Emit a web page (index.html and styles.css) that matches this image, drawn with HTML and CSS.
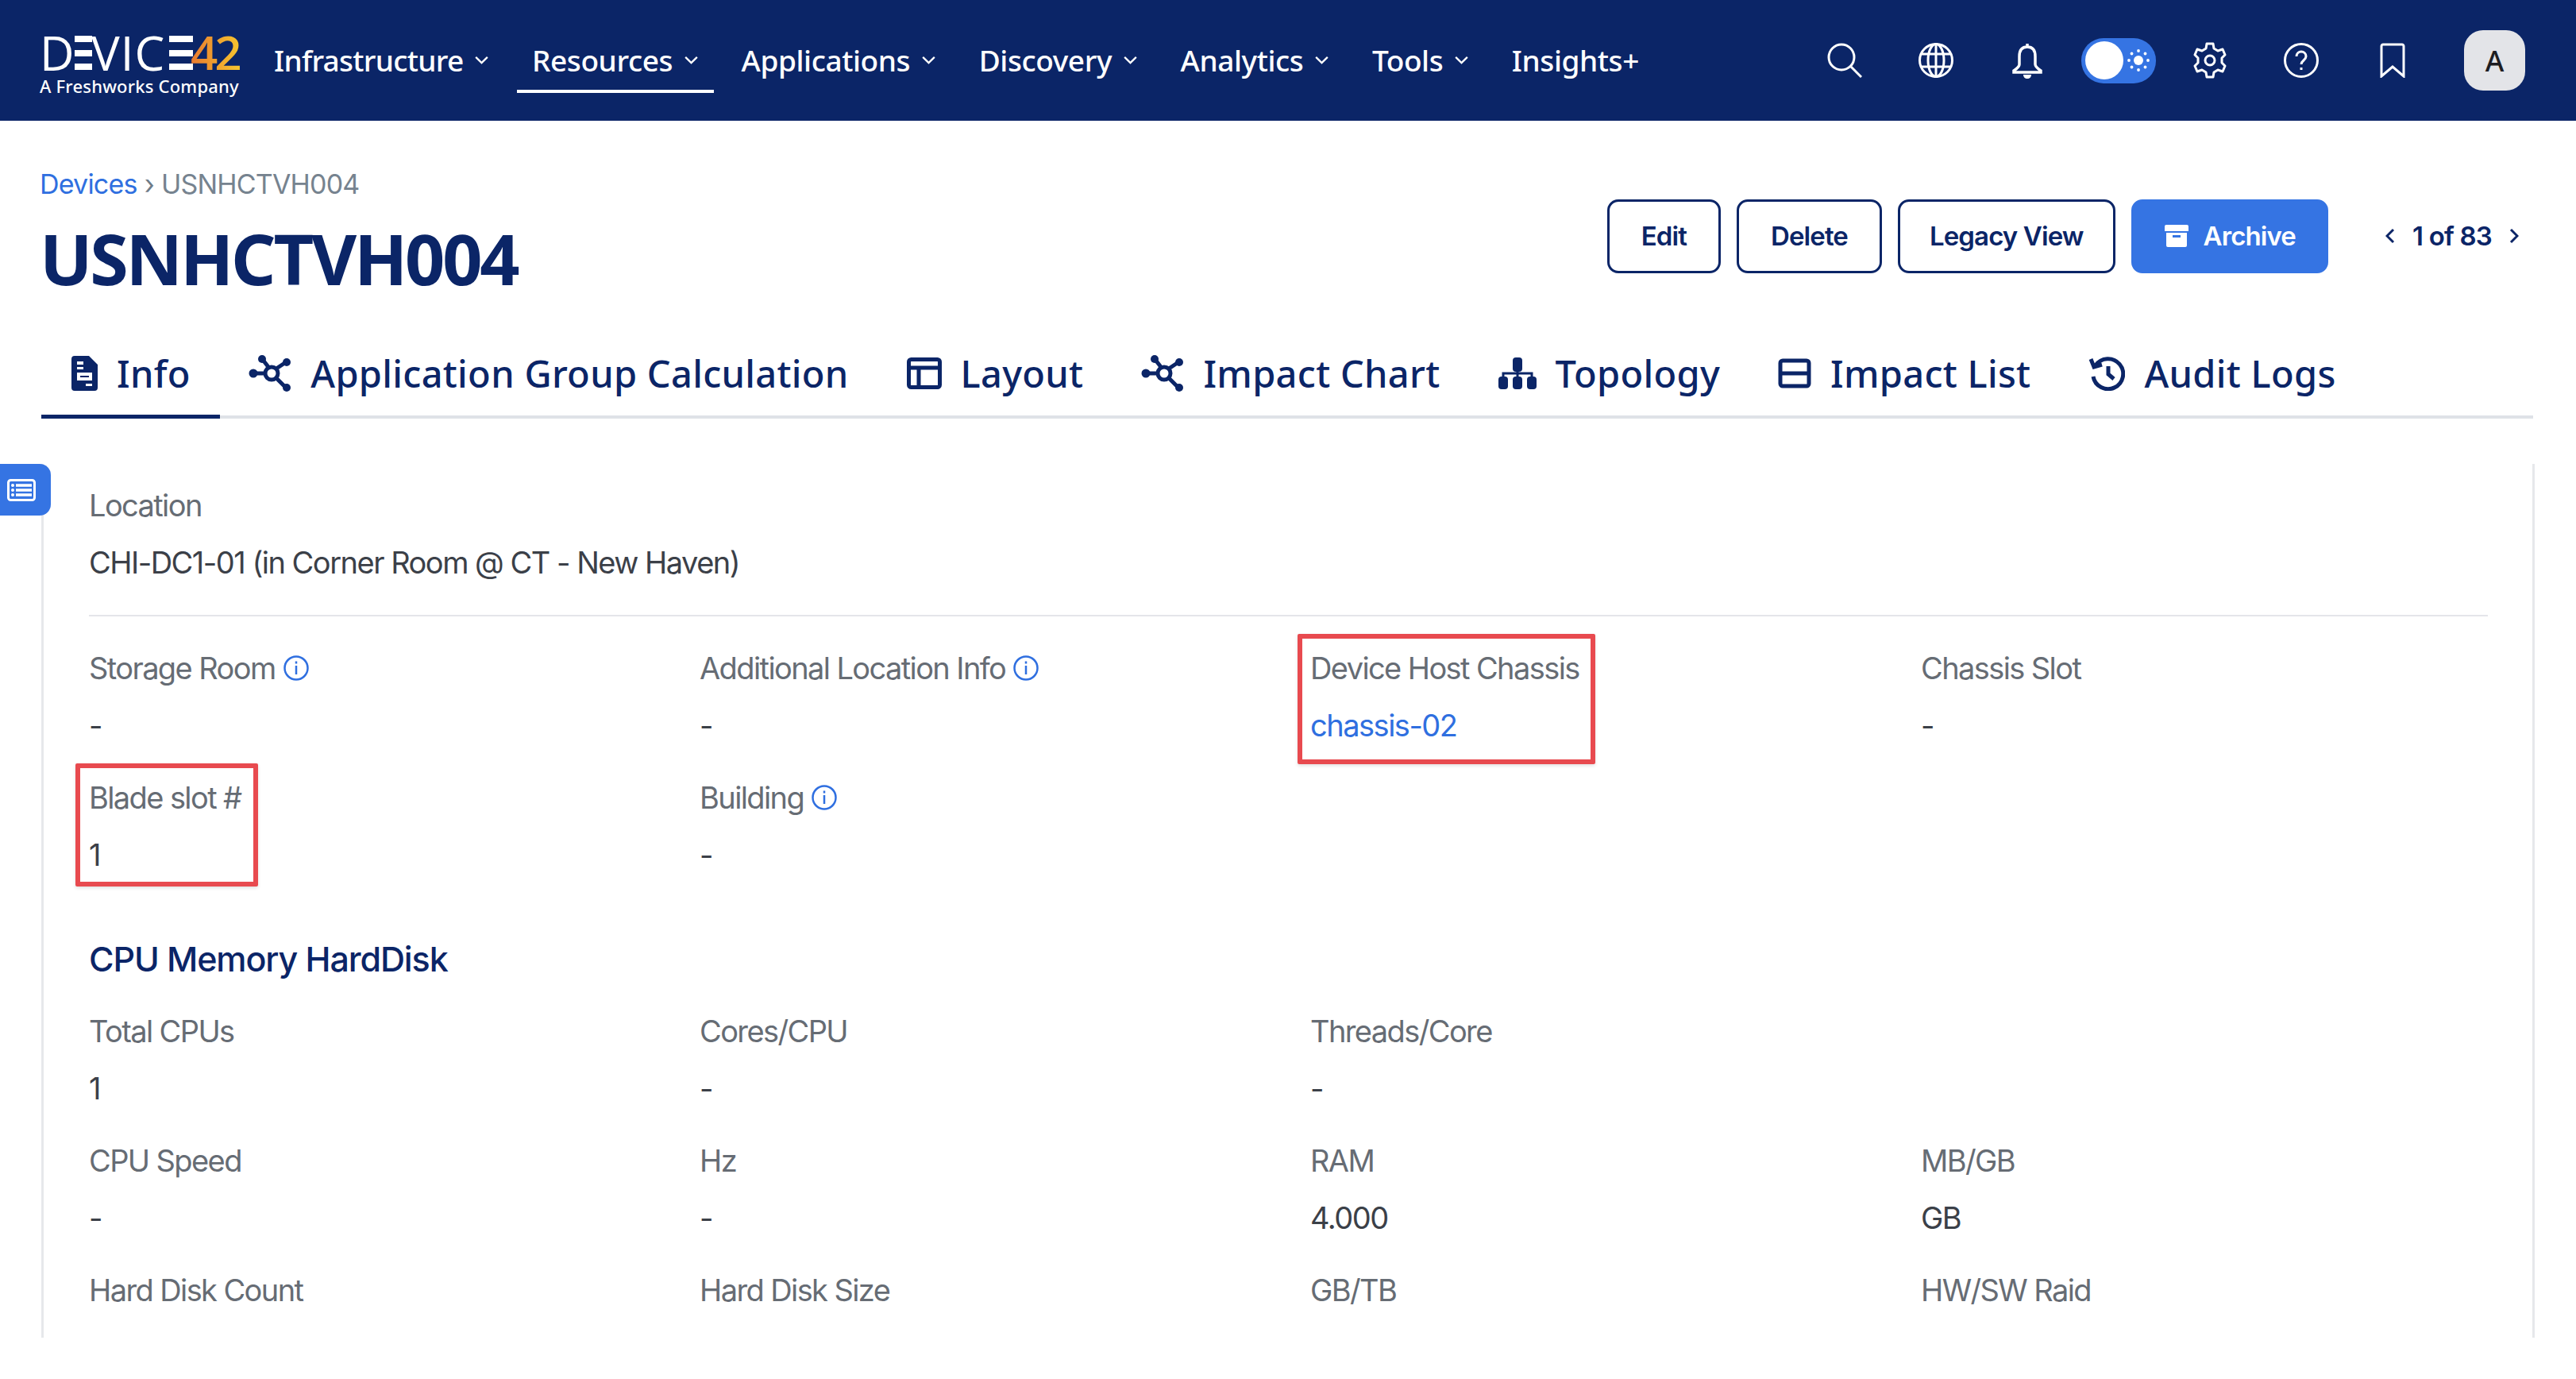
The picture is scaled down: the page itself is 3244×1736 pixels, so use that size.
FILE: index.html
```html
<!DOCTYPE html>
<html lang="en">
<head>
<meta charset="utf-8">
<title>USNHCTVH004</title>
<link rel="stylesheet" href="styles.css">
</head>
<body>
<header class="topbar">
  <div class="logo">
    <div class="logo-row">
      <span class="lt lt-d">D</span>
      <span class="bars"><i></i><i></i><i></i></span>
      <span class="lt lt-vic">VIC</span>
      <span class="bars bars-2"><i></i><i></i><i></i></span>
      <span class="lt lt-num">42</span>
    </div>
    <div class="logo-sub">A Freshworks Company</div>
  </div>
  <nav class="nav">
    <a class="nav-item nav-first">Infrastructure<svg class="chev" viewBox="0 0 20 12"><path d="M2 2l8 8 8-8"/></svg></a>
    <a class="nav-item is-active">Resources<svg class="chev" viewBox="0 0 20 12"><path d="M2 2l8 8 8-8"/></svg></a>
    <a class="nav-item">Applications<svg class="chev" viewBox="0 0 20 12"><path d="M2 2l8 8 8-8"/></svg></a>
    <a class="nav-item">Discovery<svg class="chev" viewBox="0 0 20 12"><path d="M2 2l8 8 8-8"/></svg></a>
    <a class="nav-item">Analytics<svg class="chev" viewBox="0 0 20 12"><path d="M2 2l8 8 8-8"/></svg></a>
    <a class="nav-item">Tools<svg class="chev" viewBox="0 0 20 12"><path d="M2 2l8 8 8-8"/></svg></a>
    <a class="nav-item">Insights+</a>
  </nav>
  <div class="tools">
    <span class="tool"><svg class="ic" width="44" height="44" viewBox="0 0 44 44"><circle cx="18" cy="18" r="16"/><path d="M30 30l13 13"/></svg></span>
    <span class="tool"><svg class="ic" width="44" height="44" viewBox="0 0 44 44"><circle cx="22" cy="22" r="20.500"/><ellipse cx="22" cy="22" rx="10" ry="20.500"/><path d="M4 14h36M4 30h36M22 2v40"/></svg></span>
    <span class="tool"><svg class="ic ic-bold" width="40" height="46" viewBox="0 0 40 46"><path d="M20 2v4M20 6c-7 0-10 5-10 12v10c0 3-4 6-7 8v2h34v-2c-3-2-7-5-7-8V18c0-7-3-12-10-12z"/><path class="fill" d="M15 41h10c0 3-2 5-5 5s-5-2-5-5z"/></svg></span>
    <span class="tool"><span class="toggle"><span class="knob"></span><svg class="sun" width="30" height="30" viewBox="0 0 30 30"><circle cx="15" cy="15" r="6"/><circle cx="15" cy="3" r="1.900"/><circle cx="15" cy="27" r="1.900"/><circle cx="3" cy="15" r="1.900"/><circle cx="27" cy="15" r="1.900"/><circle cx="6.500" cy="6.500" r="1.900"/><circle cx="23.500" cy="6.500" r="1.900"/><circle cx="6.500" cy="23.500" r="1.900"/><circle cx="23.500" cy="23.500" r="1.900"/></svg></span></span>
    <span class="tool"><svg class="ic ic-gear" width="42" height="46" viewBox="0 0 42 46"><circle cx="21" cy="23" r="6"/><path d="M17 2h8l1 6 5 3 6-2 3 7-4 4v6l4 4-3 7-6-2-5 3-1 6h-8l-1-6-5-3-6 2-3-7 4-4v-6l-4-4 3-7 6 2 5-3z" stroke-linejoin="round"/></svg></span>
    <span class="tool"><svg class="ic" width="44" height="44" viewBox="0 0 44 44"><circle cx="22" cy="22" r="20.500"/><path d="M16 17c0-4 3-6 6-6s6 2 6 6c0 5-6 5-6 10"/><path d="M22 31v3"/></svg></span>
    <span class="tool"><svg class="ic" width="32" height="44" viewBox="0 0 32 44"><path d="M2 42V4c0-1 1-2 2-2h24c1 0 2 1 2 2v38L16 30z"/></svg></span>
    <span class="tool tool-last"><span class="avatar">A</span></span>
  </div>
</header>

<main class="page">
  <section class="head">
    <div class="head-left">
      <div class="crumbs"><a class="crumb-link">Devices</a><span class="crumb-sep">›</span><span class="crumb-cur">USNHCTVH004</span></div>
      <h1 class="title">USNHCTVH004</h1>
    </div>
    <div class="actions">
      <button class="btn">Edit</button>
      <button class="btn">Delete</button>
      <button class="btn btn-legacy">Legacy View</button>
      <button class="btn btn-primary"><svg width="32" height="28" viewBox="0 0 32 28"><path fill="#fff" d="M1 2a2 2 0 0 1 2-2h26a2 2 0 0 1 2 2v6H1zM3 10h26v16a2 2 0 0 1-2 2H5a2 2 0 0 1-2-2z"/><rect x="11" y="13" width="10" height="3" fill="#3574e3"/></svg>Archive</button>
      <div class="pager"><svg class="pg" viewBox="0 0 12 20"><path d="M10 2l-8 8 8 8"/></svg><span>1 of 83</span><svg class="pg" viewBox="0 0 12 20"><path d="M2 2l8 8-8 8"/></svg></div>
    </div>
  </section>

  <nav class="tabs">
    <a class="tab is-active"><svg class="t-ic" width="33" height="44" viewBox="0 0 33 44"><path fill-rule="evenodd" d="M4 0h18l11 11v29a4 4 0 0 1-4 4H4a4 4 0 0 1-4-4V4a4 4 0 0 1 4-4zM7 7v4h8V7zM7 14v3h8v-3zM7 21v10h19V21zM11 25h11v2H11zM18 35v3h8v-3z"/></svg>Info</a>
    <a class="tab"><svg class="t-ic" width="54" height="46" viewBox="0 0 54 46"><g class="hub"><circle cx="29" cy="23" r="8"/><path d="M20 23H8M25 15L18 6M35 17L47 9M35 29L47 41"/></g><circle cx="6" cy="23" r="5.500"/><circle cx="17" cy="5" r="5"/><circle cx="48" cy="9" r="5"/><circle cx="48" cy="41" r="5"/></svg>Application Group Calculation</a>
    <a class="tab"><svg class="t-ic t-line" width="44" height="40" viewBox="0 0 44 40"><rect x="2.500" y="2.500" width="39" height="35" rx="3"/><path d="M2 13h40M15 13v25"/></svg>Layout</a>
    <a class="tab"><svg class="t-ic" width="54" height="46" viewBox="0 0 54 46"><g class="hub"><circle cx="29" cy="23" r="8"/><path d="M20 23H8M25 15L18 6M35 17L47 9M35 29L47 41"/></g><circle cx="6" cy="23" r="5.500"/><circle cx="17" cy="5" r="5"/><circle cx="48" cy="9" r="5"/><circle cx="48" cy="41" r="5"/></svg>Impact Chart</a>
    <a class="tab"><svg class="t-ic" width="48" height="40" viewBox="0 0 48 40"><rect x="18" y="0" width="12" height="18" rx="4"/><rect x="0" y="24" width="12" height="16" rx="4"/><rect x="18" y="24" width="12" height="16" rx="4"/><rect x="36" y="24" width="12" height="16" rx="4"/><path class="hub hub-thin" d="M24 16v8M6 26v-6h36v6"/></svg>Topology</a>
    <a class="tab"><svg class="t-ic t-line" width="42" height="38" viewBox="0 0 42 38"><rect x="3" y="3" width="36" height="32" rx="3"/><path d="M2 19h38"/></svg>Impact List</a>
    <a class="tab"><svg class="t-ic t-line2" width="46" height="44" viewBox="0 0 46 44"><path d="M9 12A19 19 0 1 1 6 26"/><path d="M3 4l4 10 10-3"/><path d="M25 13v10l7 6"/></svg>Audit Logs</a>
  </nav>

  <section class="card">
    <a class="side-tab"><svg width="36" height="28" viewBox="0 0 36 28"><rect x="1.500" y="1.500" width="33" height="25" rx="3" fill="none" stroke="#fff" stroke-width="3"/><path d="M11 8h20M11 14h20M11 20h20" stroke="#fff" stroke-width="3.500"/><circle cx="7" cy="8" r="2" fill="#fff"/><circle cx="7" cy="14" r="2" fill="#fff"/><circle cx="7" cy="20" r="2" fill="#fff"/></svg></a>

    <div class="field field-wide">
      <div class="label">Location</div>
      <div class="value">CHI-DC1-01 (in Corner Room @ CT - New Haven)</div>
    </div>

    <div class="grid grid-first">
      <div class="field"><div class="label">Storage Room<svg class="info" viewBox="0 0 32 32"><circle cx="16" cy="16" r="14.500"/><path d="M16 13v11M16 7.500v3"/></svg></div><div class="value">-</div></div>
      <div class="field"><div class="label">Additional Location Info<svg class="info" viewBox="0 0 32 32"><circle cx="16" cy="16" r="14.500"/><path d="M16 13v11M16 7.500v3"/></svg></div><div class="value">-</div></div>
      <div class="field"><div class="label">Device Host Chassis</div><div class="value"><a class="link">chassis-02</a></div><span class="mark mark-chassis"></span></div>
      <div class="field"><div class="label">Chassis Slot</div><div class="value">-</div></div>
      <div class="field"><div class="label">Blade slot #</div><div class="value">1</div><span class="mark mark-blade"></span></div>
      <div class="field"><div class="label">Building<svg class="info" viewBox="0 0 32 32"><circle cx="16" cy="16" r="14.500"/><path d="M16 13v11M16 7.500v3"/></svg></div><div class="value">-</div></div>
    </div>

    <h2 class="section-title">CPU Memory HardDisk</h2>

    <div class="grid">
      <div class="field"><div class="label">Total CPUs</div><div class="value">1</div></div>
      <div class="field"><div class="label">Cores/CPU</div><div class="value">-</div></div>
      <div class="field"><div class="label">Threads/Core</div><div class="value">-</div></div>
      <div class="field"></div>
      <div class="field"><div class="label">CPU Speed</div><div class="value">-</div></div>
      <div class="field"><div class="label">Hz</div><div class="value">-</div></div>
      <div class="field"><div class="label">RAM</div><div class="value">4.000</div></div>
      <div class="field"><div class="label">MB/GB</div><div class="value">GB</div></div>
      <div class="field"><div class="label">Hard Disk Count</div></div>
      <div class="field"><div class="label">Hard Disk Size</div></div>
      <div class="field"><div class="label">GB/TB</div></div>
      <div class="field"><div class="label">HW/SW Raid</div></div>
    </div>
  </section>
</main>
</body>
</html>
```

FILE: styles.css
```css
* { box-sizing: border-box; }
html, body { margin: 0; height: 100%; }
body { width: 3244px; height: 1736px; overflow: hidden; background: #fff; font-family: Inter, "Liberation Sans", sans-serif; }

.topbar { height: 152px; background: #0b2567; display: flex; align-items: center; padding-left: 50px; color: #fff; }
.logo { width: 276px; flex: none; display: flex; flex-direction: column; gap: 7px; margin-top: 14px; }
.logo-row { display: flex; align-items: center; height: 43px; width: 252px; }
.lt { font-family: "Open Sans", sans-serif; font-size: 60px; line-height: 43px; font-weight: 500; color: #fff; flex: none; }
.lt-d { width: 44px; }
.lt-vic { letter-spacing: 1px; width: 98px; margin-left: -1px; }
.lt-num { font-weight: 600; letter-spacing: -4px; margin-left: -3px; width: 62px; background: linear-gradient(90deg, #e8792f, #f6c52f); -webkit-background-clip: text; background-clip: text; color: transparent; }
.bars { display: flex; flex-direction: column; justify-content: space-between; width: 22px; height: 43px; flex: none; }
.bars i { display: block; height: 8px; background: #fff; }
.bars-2 { width: 30px; }
.logo-sub { font-family: "Noto Sans", sans-serif; font-size: 22px; line-height: 26px; font-weight: 500; letter-spacing: .2px; white-space: nowrap; }

.nav { display: flex; gap: 15.500px; flex: 1; align-self: stretch; }
.nav-item { display: flex; align-items: center; gap: 14px; padding: 37px 19px 0; font-family: "Noto Sans", sans-serif; font-size: 37px; font-weight: 500; letter-spacing: -.4px; color: #fff; height: 117px; border-bottom: 4px solid transparent; white-space: nowrap; }
.nav-first { letter-spacing: -.7px; }
.nav-item.is-active { border-bottom-color: #fff; }
.chev { width: 19px; height: 11px; fill: none; stroke: #fff; stroke-width: 2.500; }

.tools { display: flex; align-items: center; padding-right: 31px; }
.tool { width: 115px; display: flex; justify-content: center; align-items: center; }
.tool-last { width: 143px; }
.ic { fill: none; stroke: #fff; stroke-width: 3; }
.ic-bold { stroke-width: 3.500; }
.ic .fill { fill: #fff; stroke: none; }
.toggle { width: 94px; height: 57px; border-radius: 28px; background: #3574e3; display: flex; align-items: center; gap: 4px; padding-left: 5px; }
.knob { width: 48px; height: 48px; border-radius: 50%; background: #fff; }
.sun { fill: #fff; }
.avatar { width: 77px; height: 76px; border-radius: 24px; background: #e3e4e8; color: #1d1d22; display: flex; align-items: center; justify-content: center; font-family: "Noto Sans", sans-serif; font-size: 36px; font-weight: 500; }

.page { display: flex; flex-direction: column; }
.head { display: flex; justify-content: space-between; padding: 0 72px 0 50px; height: 218px; }
.head-left { padding-top: 59px; }
.crumbs { font-size: 34px; line-height: 42px; display: flex; gap: 9px; letter-spacing: -.8px; }
.crumb-link { color: #2f6fe0; }
.crumb-sep { color: #6f7c88; }
.crumb-cur { color: #76838f; }
.title { margin: 18px 0 0; font-family: "Noto Sans", sans-serif; font-size: 88px; line-height: 108px; font-weight: 700; color: #0b2567; letter-spacing: -3.200px; }

.actions { display: flex; align-items: center; gap: 20px; height: 92px; margin-top: 99px; }
.btn { height: 93px; padding: 0 40px; background: #fff; border: 3px solid #0b2567; border-radius: 14px; color: #0b2567; font-family: Inter, sans-serif; font-size: 33px; font-weight: 600; letter-spacing: -.9px; display: flex; align-items: center; gap: 18px; }
.btn-legacy { padding: 0 37px; }
.btn-primary { background: #3574e3; border-color: #3574e3; color: #fff; padding: 0 38px; }
.pager { display: flex; align-items: center; gap: 22px; margin-left: 52px; font-size: 33px; font-weight: 600; letter-spacing: -.8px; color: #0b2567; }
.pg { width: 12px; height: 20px; fill: none; stroke: #0b2567; stroke-width: 3; }

.tabs { display: flex; margin: 0 54px 0 52px; height: 157px; border-bottom: 4px solid #dfe2e7; }
.tab { display: flex; align-items: center; gap: 24px; height: 157px; padding: 48px 36.500px 0; border-bottom: 5px solid transparent; font-family: "Noto Sans", sans-serif; font-size: 47px; font-weight: 500; letter-spacing: .3px; color: #0b2567; white-space: nowrap; }
.tab.is-active { border-bottom-color: #0b2567; padding-left: 38px; padding-right: 37px; }
.t-ic { fill: #0b2567; flex: none; }
.t-ic .hub { stroke: #0b2567; stroke-width: 5; fill: none; }
.t-ic .hub-thin { stroke-width: 3; }
.t-line, .t-line2 { fill: none; stroke: #0b2567; stroke-width: 5; }

.card { position: relative; margin: 57px 52px 0 52px; height: 1100px; border: solid #e6e8eb; border-width: 0 3px; padding: 28px 56px 0 57px; }
.side-tab { position: absolute; left: -55px; top: 0; width: 64px; height: 65px; background: #3574e3; border-radius: 0 14px 14px 0; display: flex; align-items: center; padding-left: 9px; }
.field { position: relative; }
.label { font-size: 38px; line-height: 48px; color: #666c74; letter-spacing: -1.600px; display: flex; align-items: center; gap: 10px; white-space: nowrap; }
.value { font-size: 38px; line-height: 48px; margin-top: 24px; color: #3b4048; letter-spacing: -1.500px; white-space: nowrap; }
.link { color: #2f6fe0; }
.field-wide { padding-bottom: 42px; border-bottom: 2px solid #e4e5ea; }
.grid { display: grid; grid-template-columns: repeat(4, 769px); grid-auto-rows: 120px; row-gap: 43px; width: 3076px; }
.grid-first { margin-top: 41px; }
.section-title { margin: 80px 0 0; font-size: 43px; line-height: 54px; font-weight: 500; color: #0b2567; letter-spacing: -1.100px; height: 94px; }
.info { width: 32px; height: 32px; fill: none; stroke: #2f6fe0; stroke-width: 2.500; flex: none; }
.mark { position: absolute; border: 6px solid #e84a4f; border-radius: 2px; box-shadow: 0 2px 4px rgba(0,0,0,.12); }
.mark-chassis { left: -16px; top: -19px; width: 375px; height: 164px; }
.mark-blade { left: -17px; top: -19px; width: 230px; height: 155px; }
```
